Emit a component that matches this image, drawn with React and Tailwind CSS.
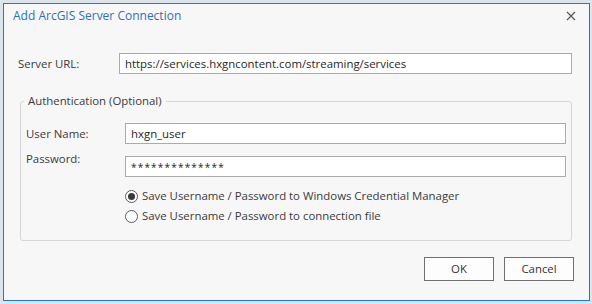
import React from "react";

function Field({ value, className }) {
  return (
    <div className={"h-[21px] border border-[#ababab] bg-white flex items-center pl-[5px] text-[#262626] " + (className || "")}>
      {value}
    </div>
  );
}

function Radio({ checked, label }) {
  return (
    <div className="h-[20px] flex items-center gap-[4px]">
      <span className="w-[13px] h-[13px] rounded-full border border-[#5c5c5c] bg-white flex items-center justify-center">
        {checked && <span className="w-[7px] h-[7px] rounded-full bg-[#3a3a3a]" />}
      </span>
      <span>{label}</span>
    </div>
  );
}

export default function App() {
  return (
    <div className="w-[592px] h-[304px] bg-[#dce5ec] pt-[3px] pl-[3px] font-['Segoe_UI','Open_Sans',sans-serif]">
      <div className="w-[587px] h-[298px] border border-[#1b7bd0] bg-[#f7f7f7] flex flex-col text-[11.4px] leading-[16px] text-[#3b3b3b]">
        <div className="h-[24px] flex items-center justify-between pl-[9px] pr-[13px]">
          <span className="text-[12px] leading-[20px] text-[#2f72b4]">Add ArcGIS Server Connection</span>
          <svg width="10" height="10" viewBox="0 0 10 10" className="text-[#555]">
            <path d="M1 1 L9 9 M9 1 L1 9" stroke="currentColor" strokeWidth="1.2" />
          </svg>
        </div>

        <div className="mt-[25px] flex items-center pl-[14px]">
          <span className="w-[101px]">Server URL:</span>
          <Field className="w-[453px]" value="https://services.hxgncontent.com/streaming/services" />
        </div>

        <fieldset className="mt-[19px] ml-[16px] w-[552px] h-[148px] border border-[#d6d6d6] rounded-[3px] pl-[5px]">
          <legend className="ml-[-2px] px-[4px]">Authentication (Optional)</legend>
          <div className="mt-[14px] flex items-center">
            <span className="w-[99px]">User Name:</span>
            <Field className="w-[441px]" value="hxgn_user" />
          </div>
          <div className="mt-[7px] flex items-start">
            <span className="w-[99px]">Password:</span>
            <Field className="w-[441px] mt-[5px] text-[10px] tracking-[1.2px]" value="**************" />
          </div>
          <div className="mt-[9px] pl-[99px]">
            <Radio checked label="Save Username / Password to Windows Credential Manager" />
            <Radio label="Save Username / Password to connection file" />
          </div>
        </fieldset>

        <div className="mt-[16px] flex justify-end gap-[10px] pr-[15px]">
          <button className="w-[70px] h-[24px] border border-[#707070] bg-[#fdfdfd] text-[#333]">OK</button>
          <button className="w-[70px] h-[24px] border border-[#707070] bg-[#fdfdfd] text-[#333]">Cancel</button>
        </div>
      </div>
    </div>
  );
}
